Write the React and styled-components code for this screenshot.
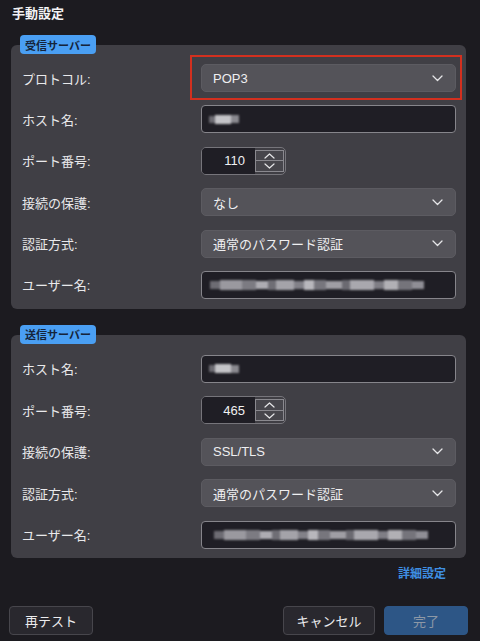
import React from "react";
import styled, { createGlobalStyle } from "styled-components";

const Global = createGlobalStyle`
  html, body { margin: 0; padding: 0; background: #1c1b20; }
  body { font-family: "Liberation Sans", "Noto Sans CJK JP", sans-serif; color: #ececee; }
  * { box-sizing: border-box; }
`;

const Page = styled.div`
  width: 480px;
  height: 641px;
  padding: 4px 12px 0 9px;
  display: flex;
  flex-direction: column;
  background: #1c1b20;
`;

const Title = styled.h1`
  margin: 0 0 0 3px;
  font-size: 13px;
  line-height: 20px;
  font-weight: 700;
  color: #f2f2f4;
`;

const Section = styled.section`
  position: relative;
  margin: ${(p) => p.$top}px 2px 0 2px;
`;

const Badge = styled.div`
  position: absolute;
  top: -10px;
  left: 9px;
  height: 19px;
  width: 76px;
  display: flex;
  align-items: center;
  justify-content: center;
  background: #4a9ff3;
  color: #15243a;
  font-size: 11px;
  font-weight: 700;
  border-radius: 4px;
  z-index: 2;
`;

const Panel = styled.div`
  background: #403f45;
  border-radius: 6px;
  padding: ${(p) => p.$pt}px 10px ${(p) => p.$pb}px 11px;
  display: grid;
  grid-template-columns: 179px 1fr;
  grid-auto-rows: 28px;
  row-gap: 13.4px;
  align-items: center;
`;

const Label = styled.div`
  font-size: 13px;
  color: #e9e9eb;
`;

const SelectBox = styled.div`
  position: relative;
  height: 28px;
  background: #545359;
  border: 1px solid #5c5b61;
  border-radius: 5px;
  display: flex;
  align-items: center;
  justify-content: space-between;
  padding: 0 12px 0 11px;
  font-size: 13px;
  color: #efeff1;
`;

const Highlight = styled.div`
  position: absolute;
  left: -12px;
  right: -7px;
  top: -10px;
  bottom: -9px;
  border: 2px solid #d3301f;
  pointer-events: none;
  z-index: 5;
`;

const TextInput = styled.div`
  height: 28px;
  background: #1f1e25;
  border: 1px solid #86858b;
  border-radius: 4px;
  display: flex;
  align-items: center;
  padding-left: ${(p) => p.$pl}px;
  overflow: hidden;
`;

const Blur = styled.div`
  display: flex;
  align-items: center;
  filter: blur(1.3px);
`;

const BlurSeg = styled.span`
  display: block;
  height: ${(p) => p.$h}px;
  width: ${(p) => p.$w}px;
  background: ${(p) => p.$c};
`;

const Spinner = styled.div`
  width: 85px;
  height: 28px;
  border: 1px solid #76757b;
  border-radius: 5px;
  background: #3f3e44;
  display: flex;
  align-items: stretch;
  overflow: hidden;
`;

const SpinValue = styled.div`
  width: 53px;
  background: #1f1e25;
  display: flex;
  align-items: center;
  justify-content: flex-end;
  padding-right: 10px;
  font-size: 13px;
  color: #f0f0f2;
`;

const Stepper = styled.div`
  margin: 2px 1px 2px 0;
  width: 29px;
  border: 1px solid #8a898f;
  display: flex;
  flex-direction: column;
  background: #47464c;
`;

const StepHalf = styled.div`
  flex: 1;
  display: flex;
  align-items: center;
  justify-content: center;
  border-top: ${(p) => (p.$bottom ? "1px solid #8a898f" : "none")};
`;

const Link = styled.div`
  margin: 7px 22px 0 0;
  align-self: flex-end;
  line-height: 18px;
  font-size: 12px;
  font-weight: 700;
  color: #3f8fe3;
`;

const ButtonRow = styled.div`
  margin-top: 23px;
  display: flex;
  align-items: center;
  gap: 9px;
`;

const Button = styled.div`
  width: ${(p) => p.$w}px;
  height: 29px;
  border-radius: 4px;
  display: flex;
  align-items: center;
  justify-content: center;
  font-size: 13px;
  background: ${(p) => (p.$primary ? "#2d5686" : "#29282e")};
  border: 1px solid ${(p) => (p.$primary ? "#2d5686" : "#47464c")};
  color: ${(p) => (p.$primary ? "#8d98a6" : "#ececee")};
  margin-right: ${(p) => (p.$push ? "auto" : "0")};
`;

const Chevron = () => (
  <svg width="11" height="7" viewBox="0 0 11 7">
    <path d="M1 1 L5.5 5.5 L10 1" fill="none" stroke="#e6e6e8" strokeWidth="1.3" strokeLinecap="round" strokeLinejoin="round" />
  </svg>
);

const SmallChev = ({ up }) => (
  <svg width="11" height="6" viewBox="0 0 11 6">
    <path d={up ? "M1 5 L5.5 1 L10 5" : "M1 1 L5.5 5 L10 1"} fill="none" stroke="#e6e6e8" strokeWidth="1.2" strokeLinecap="round" strokeLinejoin="round" />
  </svg>
);

const Select = ({ value, highlight }) => (
  <SelectBox>
    <span>{value}</span>
    <Chevron />
    {highlight && <Highlight />}
  </SelectBox>
);

const Port = ({ value }) => (
  <Spinner>
    <SpinValue>{value}</SpinValue>
    <Stepper>
      <StepHalf>
        <SmallChev up />
      </StepHalf>
      <StepHalf $bottom>
        <SmallChev />
      </StepHalf>
    </Stepper>
  </Spinner>
);

const HostBlur = () => (
  <TextInput $pl={7}>
    <Blur>
      <BlurSeg $w={6} $h={7} $c="#6c6b72" />
      <BlurSeg $w={16} $h={9} $c="#c4c4c8" />
      <BlurSeg $w={8} $h={8} $c="#8a898f" />
    </Blur>
  </TextInput>
);

const userSegs = [
  ["#6d6c73", 10],
  ["#9a999f", 22],
  ["#7c7b82", 14],
  ["#adacb2", 12],
  ["#6f6e75", 8],
  ["#a4a3a9", 18],
  ["#828188", 10],
  ["#b8b7bc", 10],
  ["#77767d", 12],
  ["#9f9ea4", 16],
  ["#6b6a71", 8],
  ["#a9a8ae", 24],
  ["#7f7e85", 10],
  ["#b1b0b5", 14],
  ["#75747b", 14],
  ["#8f8e95", 12],
];

const UserBlur = ({ pl }) => (
  <TextInput $pl={pl}>
    <Blur>
      {userSegs.map(([c, w], i) => (
        <BlurSeg key={i} $w={w} $h={i % 3 === 0 ? 8 : 10} $c={c} />
      ))}
    </Blur>
  </TextInput>
);

export default function App() {
  return (
    <>
      <Global />
      <Page>
        <Title>手動設定</Title>

        <Section $top={21}>
          <Badge>受信サーバー</Badge>
          <Panel $pt={19} $pb={10}>
            <Label>プロトコル:</Label>
            <Select value="POP3" highlight />
            <Label>ホスト名:</Label>
            <HostBlur />
            <Label>ポート番号:</Label>
            <Port value="110" />
            <Label>接続の保護:</Label>
            <Select value="なし" />
            <Label>認証方式:</Label>
            <Select value="通常のパスワード認証" />
            <Label>ユーザー名:</Label>
            <UserBlur pl={8} />
          </Panel>
        </Section>

        <Section $top={26}>
          <Badge>送信サーバー</Badge>
          <Panel $pt={20} $pb={9}>
            <Label>ホスト名:</Label>
            <HostBlur />
            <Label>ポート番号:</Label>
            <Port value="465" />
            <Label>接続の保護:</Label>
            <Select value="SSL/TLS" />
            <Label>認証方式:</Label>
            <Select value="通常のパスワード認証" />
            <Label>ユーザー名:</Label>
            <UserBlur pl={12} />
          </Panel>
        </Section>

        <Link>詳細設定</Link>

        <ButtonRow>
          <Button $w={84} $push>再テスト</Button>
          <Button $w={92}>キャンセル</Button>
          <Button $w={84} $primary>完了</Button>
        </ButtonRow>
      </Page>
    </>
  );
}
